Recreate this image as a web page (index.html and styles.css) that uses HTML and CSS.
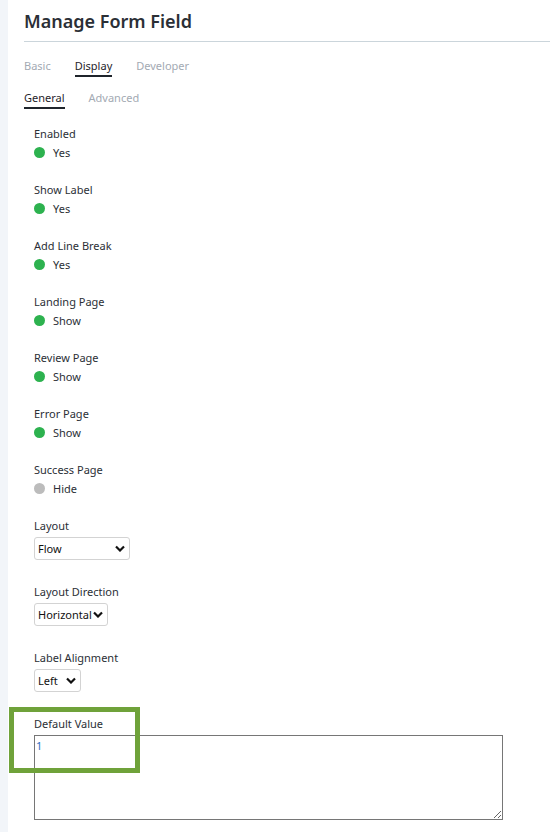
FILE: index.html
```html
<!DOCTYPE html>
<html lang="en">
<head>
    <meta charset="UTF-8">
    <meta name="viewport" content="width=device-width, initial-scale=1.0">
    <title>Manage Form Field</title>
    <link rel="stylesheet" href="styles.css">
</head>
<body>
    <div id="page">
        <div id="strip"></div>
        <div id="main">
            <h1 class="title">Manage Form Field</h1>
            <div class="tabs">
                <span class="tab">Basic</span>
                <span class="tab active">Display</span>
                <span class="tab">Developer</span>
            </div>
            <div class="tabs sub">
                <span class="tab active">General</span>
                <span class="tab">Advanced</span>
            </div>

            <div class="fields">
                <div class="field">
                    <div class="label">Enabled</div>
                    <div class="status"><span class="dot on"></span>Yes</div>
                </div>
                <div class="field">
                    <div class="label">Show Label</div>
                    <div class="status"><span class="dot on"></span>Yes</div>
                </div>
                <div class="field">
                    <div class="label">Add Line Break</div>
                    <div class="status"><span class="dot on"></span>Yes</div>
                </div>
                <div class="field">
                    <div class="label">Landing Page</div>
                    <div class="status"><span class="dot on"></span>Show</div>
                </div>
                <div class="field">
                    <div class="label">Review Page</div>
                    <div class="status"><span class="dot on"></span>Show</div>
                </div>
                <div class="field">
                    <div class="label">Error Page</div>
                    <div class="status"><span class="dot on"></span>Show</div>
                </div>
                <div class="field">
                    <div class="label">Success Page</div>
                    <div class="status"><span class="dot off"></span>Hide</div>
                </div>

                <div class="field pick">
                    <div class="label">Layout</div>
                    <div class="select" style="width: 96px">
                        <span>Flow</span>
                        <svg width="10" height="7" viewBox="0 0 10 7"><path d="M1 1.5 L5 5.5 L9 1.5" fill="none" stroke="#111" stroke-width="2.2"/></svg>
                    </div>
                </div>
                <div class="field pick">
                    <div class="label">Layout Direction</div>
                    <div class="select" style="width: 74px">
                        <span>Horizontal</span>
                        <svg width="10" height="7" viewBox="0 0 10 7"><path d="M1 1.5 L5 5.5 L9 1.5" fill="none" stroke="#111" stroke-width="2.2"/></svg>
                    </div>
                </div>
                <div class="field pick">
                    <div class="label">Label Alignment</div>
                    <div class="select" style="width: 47px">
                        <span>Left</span>
                        <svg width="10" height="7" viewBox="0 0 10 7"><path d="M1 1.5 L5 5.5 L9 1.5" fill="none" stroke="#111" stroke-width="2.2"/></svg>
                    </div>
                </div>

                <div class="field">
                    <div class="label">Default Value</div>
                    <textarea class="value">1</textarea>
                </div>
            </div>
        </div>
        <div id="highlight"></div>
    </div>
</body>
</html>
```

FILE: styles.css
```css
body {
    margin: 0;
    font-family: "Noto Sans", "Open Sans", sans-serif;
    color: #2b2f36;
    background-color: #fff;
}

#page {
    position: relative;
    display: flex;
    min-height: 832px;
}

#strip {
    width: 8px;
    background-color: #f2f5f9;
}

#main {
    flex: 1;
    padding-left: 16px;
}

.title {
    margin: 0;
    padding-top: 8px;
    height: 33px;
    font-size: 18px;
    font-weight: 600;
    line-height: 26px;
    color: #2b2f36;
    border-bottom: 1px solid #cbd5db;
}

.tabs {
    display: flex;
    gap: 24px;
    margin-top: 16px;
    font-size: 11px;
    line-height: 16px;
}

.tabs.sub {
    margin-top: 13px;
}

.tab {
    color: #a3aab3;
    padding-bottom: 1px;
}

.tab.active {
    color: #1f242b;
    border-bottom: 2px solid #1f242b;
}

.fields {
    padding-left: 10px;
    margin-top: 17px;
}

.field {
    margin-bottom: 20px;
}

.label {
    font-size: 11px;
    line-height: 16px;
    color: #2b2f36;
}

.status {
    display: flex;
    align-items: center;
    height: 20px;
    font-size: 11px;
    color: #2b2f36;
}

.dot {
    width: 11px;
    height: 11px;
    border-radius: 50%;
    margin-right: 8px;
}

.dot.on {
    background-color: #2db24f;
}

.dot.off {
    background-color: #bcbcbc;
}

.field.pick {
    margin-bottom: 24px;
}

.select {
    box-sizing: border-box;
    display: flex;
    justify-content: space-between;
    align-items: center;
    height: 23px;
    margin-top: 3px;
    padding: 0 4px 0 3px;
    font-size: 11px;
    border: 1px solid #d3d3d3;
    border-radius: 3px;
    color: #111;
}

.value {
    display: block;
    box-sizing: border-box;
    width: 469px;
    height: 85px;
    margin-top: 3px;
    padding: 2px 1px;
    font-family: "Noto Sans", sans-serif;
    font-size: 11px;
    color: #2f6fbf;
    border: 1px solid #767676;
    border-radius: 0;
}

#highlight {
    position: absolute;
    left: 9px;
    top: 707px;
    width: 131px;
    height: 66px;
    box-sizing: border-box;
    border: 5px solid #6fa23a;
}
```
